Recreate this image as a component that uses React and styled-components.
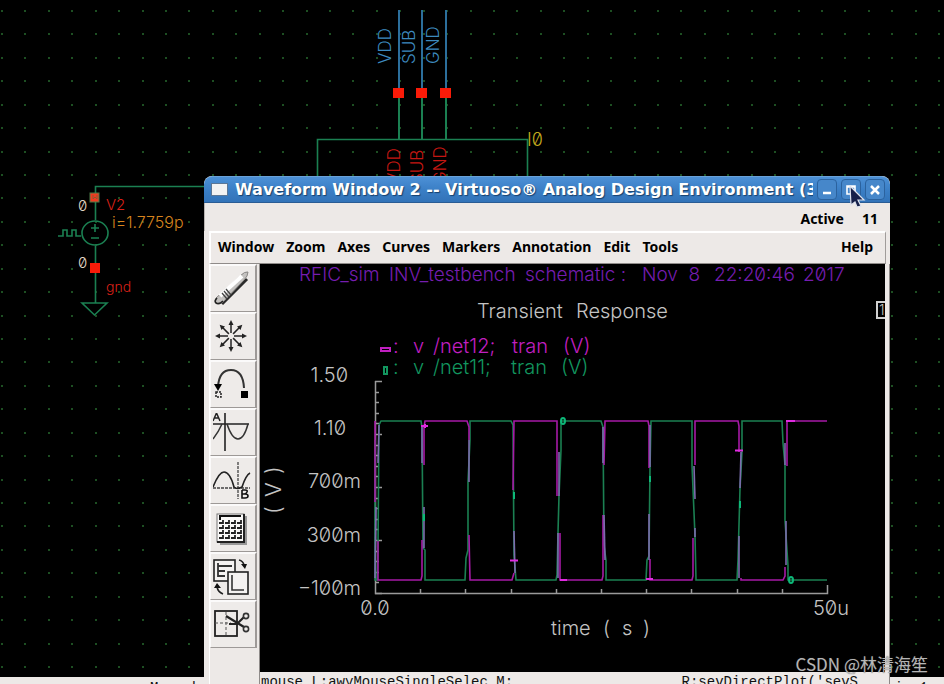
import React from "react";
import styled, { createGlobalStyle } from "styled-components";

const PANEL = "#ede9e7";
const GREEN = "#1b8052";
const MAGENTA = "#a61aa6";
const VIOLET = "#7d6bae";
const TEAL = "#12965f";
const PINK = "#c01fc0";
const GREY = "#9a9a9a";

const GlobalStyle = createGlobalStyle`
  html, body, #root { height: 100%; }
  body { margin: 0; background: #000; overflow: hidden; }
  * { box-sizing: border-box; }
`;

const Desktop = styled.main`
  position: relative;
  display: flex;
  flex-direction: column;
  height: 100vh;
  overflow: hidden;
  background: #000;
`;

const SchematicArea = styled.div`
  flex: 1;
  min-height: 0;
  overflow: hidden;
`;

const SchematicSvg = styled.svg`
  display: block;
  width: 1600px;
  height: 1200px;
`;

const StrokeText = styled.text`
  font-family: Inter, "DejaVu Sans", sans-serif;
  font-weight: 300;
  font-size: ${(p) => p.$size || 20}px;
  fill: ${(p) => p.$color || "#c4c4c4"};
  font-feature-settings: "zero" 1;
  white-space: pre;
`;

const MouseBar = styled.footer`
  display: flex;
  height: ${(p) => p.$height}px;
  flex: none;
  justify-content: space-between;
  overflow: hidden;
  padding: ${(p) => p.$pad};
  background: ${PANEL};
  color: #111;
  font: 14px/16px "Liberation Mono", monospace;
  white-space: pre;
`;

const Frame = styled.section`
  position: absolute;
  top: 176px;
  right: 54px;
  bottom: 0;
  left: 204px;
  display: flex;
  flex-direction: column;
  overflow: hidden;
  border-radius: 8px 8px 0 0;
  background: ${PANEL};
`;

const TitleBar = styled.header`
  display: flex;
  flex: none;
  align-items: center;
  gap: 4px;
  height: 27px;
  padding: 0 5px 0 7px;
  border-top: 1px solid #6aa2d8;
  border-bottom: 1px solid #2a5c94;
  border-radius: 8px 8px 0 0;
  background: linear-gradient(#4c90d6, #3b7fc6 50%, #3273b8);
`;

const WindowGlyph = styled.span`
  flex: none;
  width: 17px;
  height: 13px;
  border: 1px solid #5b7796;
  background: #f2f2f2;
`;

const Title = styled.h1`
  flex: 1;
  min-width: 0;
  margin: 0 0 0 3px;
  overflow: hidden;
  color: #fff;
  font: bold 16px/22px "DejaVu Sans", sans-serif;
  text-shadow: 1px 1px 1px #17406c;
  white-space: nowrap;
`;

const TitleButton = styled.button`
  display: grid;
  flex: none;
  place-items: center;
  width: 20px;
  height: 21px;
  padding: 0;
  border: 1px solid #2b629e;
  border-radius: 4px;
  background: #4687ca;
  color: #fff;
`;

const StatusRow = styled.div`
  display: flex;
  flex: none;
  justify-content: flex-end;
  gap: 18px;
  height: 28px;
  padding: 0 12px 0 0;
  border-left: 1px solid #b8b4b2;
  color: #000;
  font: bold 14px/32px "Noto Sans", sans-serif;
`;

const MenuBar = styled.nav`
  display: flex;
  flex: none;
  align-items: center;
  gap: 12px;
  height: 33px;
  margin: 0 4px 0 5px;
  padding: 0 12px 3px 7px;
  border: solid;
  border-width: 2px 1px 1px 2px;
  border-color: #fff #a09c9a #8f8b89 #fff;
`;

const MenuItem = styled.button`
  margin-left: ${(p) => (p.$end ? "auto" : "0")};
  padding: 0;
  border: 0;
  background: none;
  color: #000;
  font: bold 14px/20px "Noto Sans", sans-serif;
`;

const Body = styled.div`
  display: flex;
  flex: 1;
  min-height: 0;
  padding-right: 4px;
  border-right: 1px solid #8d8987;
`;

const ToolColumn = styled.div`
  display: flex;
  flex: none;
  flex-direction: column;
  width: 51px;
  margin-left: 5px;
  padding-right: 3px;
  border-left: 1px solid #fff;
  border-right: 1px solid #8f8b89;
`;

const ToolButton = styled.button`
  display: grid;
  place-items: center;
  width: 47px;
  height: 48px;
  padding: 0;
  border: solid;
  border-width: 2px 2px 1px 1px;
  border-color: #fbfafa #9d9997 #9d9997 #fbfafa;
  background: #eeebe9;
`;

const Content = styled.div`
  display: flex;
  flex: 1;
  flex-direction: column;
  min-width: 0;
`;

const Plot = styled.div`
  flex: 1;
  min-height: 0;
  overflow: hidden;
  background: #000;
`;

const PlotSvg = styled.svg`
  display: block;
  width: 100%;
  height: auto;
`;

const Pointer = styled.svg`
  position: absolute;
  top: 185px;
  left: 848px;
  pointer-events: none;
`;

const Watermark = styled.div`
  position: absolute;
  right: 16px;
  bottom: 8px;
  color: rgba(205, 205, 205, 0.85);
  font: 17px/24px "Noto Sans CJK SC", sans-serif;
  text-shadow: 0 0 1px #444;
  white-space: nowrap;
`;

const PITCH = 23.43;
const dots = [];
for (let row = 0; row < 50; row += 1) {
  for (let col = 0; col < 68; col += 1) {
    dots.push([Math.round(1 + col * PITCH), Math.round(10 + row * PITCH)]);
  }
}

const pins = [
  { x: 399, name: "VDD" },
  { x: 422, name: "SUB" },
  { x: 446, name: "GND" },
];

function Schematic() {
  return (
    <SchematicSvg viewBox="0 0 1600 1200" role="img" aria-label="Schematic">
      <g fill="#1d4f22">
        {dots.map(([x, y]) => (
          <rect key={`${x}-${y}`} x={x} y={y} width="2" height="2" />
        ))}
      </g>
      <g fill="none" stroke={GREEN} strokeWidth="1.6">
        <path d="M317.500 190V139.500H527.500V190" />
        <path d="M95.500 220V186.500H320M95.500 246V303M82 303H107L94.500 315Z" />
        <ellipse cx="95" cy="233" rx="13" ry="12" />
        <path d="M91 228h8M95 224v8M91 238h8" />
        <path d="M58 236h5v-6h4v6h5v-6h4v6h5" />
      </g>
      {pins.map(({ x, name }, i) => (
        <g key={name}>
          <path d={`M${x} 10V90`} stroke="#2c6f9c" strokeWidth="2" />
          <path d={`M${x} 96V140`} stroke={GREEN} strokeWidth="2" />
          <rect x={x - 6} y="88" width="11" height="10" fill="#f91b08" />
          <StrokeText $size={17} $color="#3d8abf" transform={`translate(${391 + i * 24} 64) rotate(-90)`}>
            {name}
          </StrokeText>
          <StrokeText $size={17} $color="#c41712" transform={`translate(${400 + i * 23} 184) rotate(-90)`}>
            {name}
          </StrokeText>
        </g>
      ))}
      <rect x="90" y="193" width="9" height="9" fill="#f03a20" stroke="#4a7a48" />
      <path d="M93 195v4l2 -2l2 2v-4" fill="none" stroke="#8a5a30" />
      <rect x="90" y="263" width="10" height="10" fill="#f91b08" />
      <StrokeText $size={15} $color="#e2d8c6" x="78" y="211">0</StrokeText>
      <StrokeText $size={15} $color="#e2d8c6" x="78" y="268">0</StrokeText>
      <StrokeText $size={15} $color="#dd2018" x="106" y="210">V2</StrokeText>
      <StrokeText $size={16} $color="#d8841e" x="112" y="228">i=1.7759p</StrokeText>
      <StrokeText $size={14} $color="#dd2018" x="106" y="292">gnd</StrokeText>
      <StrokeText $size={18} $color="#c4aa1e" x="527" y="146">I0</StrokeText>
    </SchematicSvg>
  );
}

const yLabels = [
  ["1.50", 348, 382],
  ["1.10", 346, 435],
  ["700m", 361, 488],
  ["300m", 361, 542],
  ["−100m", 361, 595],
];

const magentaPath =
  "M375 421V502M378 541V580H421L422 576V540M424 465V427L425 421H467L469 427V440M469 535L470 580H512L514 573" +
  "M513 490L514 421H557V496M560 533V580H602L603 576V515M604 465L605 421H648L649 426V468M650 559V580H692L693 576V538" +
  "M695 465V421H738L739 426V452M741 578V580H783L785 576V567M787 466V421H827";

const greenPath =
  "M375 440V580H377L378 550L379 425L381 421H421L422 427L423 548L425 550V580H465L466 558L468 550V482L470 440V421H511L513 425L514 555L516 580H556L557 575L558 533" +
  "L559 496L561 450V421H601L603 427L604 545L606 560V580H646L647 560L649 556L650 468L651 421H692V465L695 536L696 580H737L738 560L740 489L742 452V421H782L783 443L785 465V520L788 566V580H827";

const blends = [
  [376, 507, 375, 578], [379, 425, 378, 463], [422, 427, 422, 463], [424, 507, 424, 548],
  [469, 440, 469, 482], [514, 531, 515, 573], [559, 452, 559, 496], [558, 533, 558, 578],
  [603, 427, 603, 463], [604, 515, 605, 560], [650, 467, 650, 425], [649, 514, 649, 560],
  [694, 466, 695, 499], [695, 528, 695, 537], [741, 452, 740, 488], [739, 536, 739, 578],
  [785, 443, 785, 465], [786, 521, 786, 565],
];

const minorY = Array.from({ length: 21 }, (_, i) => Math.round(381 + i * 10.6));
const minorX = Array.from({ length: 9 }, (_, i) => Math.round(375 + (i + 1) * 45.2));

function Waveform() {
  return (
    <PlotSvg viewBox="260 264 625 408" role="img" aria-label="Transient Response">
      <StrokeText $size={19} $color="#751db0" y="281">
        <tspan x="299">RFIC_sim</tspan>
        <tspan x="389">INV_testbench</tspan>
        <tspan x="525">schematic :</tspan>
        <tspan x="642">Nov  8</tspan>
        <tspan x="714">22:20:46</tspan>
        <tspan x="803">2017</tspan>
      </StrokeText>
      <StrokeText x="477" y="318">
        Transient<tspan x="576">Response</tspan>
      </StrokeText>
      <rect x="877" y="302" width="12" height="16" fill="none" stroke="#d0d0d0" strokeWidth="2" />
      <StrokeText $size={14} x="879" y="315">1</StrokeText>

      <rect x="381" y="348" width="9" height="3" fill="none" stroke={PINK} strokeWidth="2" />
      <StrokeText $color={PINK} y="353">
        <tspan x="393">:</tspan>
        <tspan x="413">v</tspan>
        <tspan x="433">/net12;</tspan>
        <tspan x="512">tran</tspan>
        <tspan x="563">(V)</tspan>
      </StrokeText>
      <rect x="384" y="367" width="3" height="7" fill="none" stroke={TEAL} strokeWidth="2" />
      <StrokeText $color={TEAL} y="374">
        <tspan x="393">:</tspan>
        <tspan x="413">v</tspan>
        <tspan x="433">/net11;</tspan>
        <tspan x="511">tran</tspan>
        <tspan x="561">(V)</tspan>
      </StrokeText>

      {yLabels.map(([label, x, y]) => (
        <StrokeText key={label} x={x} y={y} textAnchor="end">{label}</StrokeText>
      ))}
      <StrokeText x="375" y="615" textAnchor="middle">0.0</StrokeText>
      <StrokeText x="831" y="615" textAnchor="middle">50u</StrokeText>
      <StrokeText y="635">
        <tspan x="551">time</tspan>
        <tspan x="603">(</tspan>
        <tspan x="622">s</tspan>
        <tspan x="643">)</tspan>
      </StrokeText>
      <StrokeText $size={22} transform="translate(281 514) rotate(-90)">
        <tspan x="0">(</tspan>
        <tspan x="17">V</tspan>
        <tspan x="40">)</tspan>
      </StrokeText>

      <g fill="none" stroke={GREY} strokeWidth="1.500">
        <path d="M375.500 381V593.500H827.500V585" />
        {minorY.map((y, i) => (
          <path key={y} d={`M375 ${y + 0.5}h${i % 5 === 0 ? 7 : 4}`} />
        ))}
        {minorX.map((x) => (
          <path key={x} d={`M${x + 0.5} 593v-4`} />
        ))}
      </g>
      <g fill="none" strokeWidth="1.600">
        <path d={greenPath} stroke={GREEN} />
        <path d={magentaPath} stroke={MAGENTA} />
        {blends.map(([x1, y1, x2, y2]) => (
          <path key={`${x1}-${y1}`} d={`M${x1} ${y1}L${x2} ${y2}`} stroke={VIOLET} />
        ))}
      </g>
      <g fill="none" stroke="#e02be0" strokeWidth="2">
        <path d="M421 426h7M425 424v4M510 560.500h8M560 580h7M646 579h7M735 450.500h8M786 421h9" />
      </g>
      <g fill="none" stroke="#0db878" strokeWidth="2">
        <path d="M424 514v7M514 492v7M650 476v6M740 501v7" />
        <ellipse cx="563" cy="421" rx="2" ry="3" />
        <ellipse cx="791" cy="580" rx="2" ry="3" />
      </g>
    </PlotSvg>
  );
}

const tools = [
  {
    name: "Erase",
    art: (
      <>
        <path d="M11 36L36 11" stroke="#2a2a2a" strokeWidth="3" />
        <path d="M5 30L29 8Q34 3 37 4Q37 8 33 12L12 34Q8 37 5 35Q3 33 5 30Z" fill="#c4c2c0" stroke="#8a8886" />
        <path d="M9 28L31 8" stroke="#fff" strokeWidth="4" />
        <path d="M6 30Q3 33 5 35Q8 37 12 33" fill="none" stroke="#222" strokeWidth="1.600" />
        <path d="M11 25l5 6M13 23l5 6M15 21l5 6" stroke="#444" strokeWidth="1.300" />
      </>
    ),
  },
  {
    name: "Fit",
    art: (
      <g transform="translate(20 20)">
        {[0, 45, 90, 135, 180, 225, 270, 315].map((a) => (
          <g key={a} transform={`rotate(${a})`}>
            <path d="M3 0H13" stroke="#222" strokeWidth="1.500" />
            <path d="M11 -2.500L16 0L11 2.500Z" fill="#222" />
          </g>
        ))}
      </g>
    ),
  },
  {
    name: "Swap",
    art: (
      <>
        <path d="M7 23Q8 6 20 6Q32 6 33 24" fill="none" stroke="#333" strokeWidth="2" />
        <path d="M3 20h8l-4 7Z" fill="#000" />
        <rect x="5" y="28" width="5" height="5" fill="none" stroke="#222" strokeDasharray="2 1" strokeWidth="1.500" />
        <rect x="30" y="27" width="7" height="7" fill="#000" />
      </>
    ),
  },
  {
    name: "Marker A",
    art: (
      <>
        <path d="M1 12H38M14 1V39" stroke="#222" strokeWidth="1.600" />
        <path d="M2 27Q8 19 11 12M16 12Q21 27 27 27Q33 27 37 12" fill="none" stroke="#333" strokeWidth="1.500" />
        <path d="M2 9L5.500 1L9 9M3 6h5" fill="none" stroke="#222" strokeWidth="1.500" />
      </>
    ),
  },
  {
    name: "Marker B",
    art: (
      <>
        <path d="M2 28H39M27 2V39" stroke="#444" strokeDasharray="3 1" strokeWidth="1.300" />
        <path d="M2 27Q8 12 13 12Q19 12 23 27Q26 30 31 27Q35 15 39 13" fill="none" stroke="#222" strokeWidth="1.600" />
        <path d="M31 30v8h3q3 0 3 -2t-3 -2h-3M31 30h3q3 0 2 2t-3 2" fill="none" stroke="#111" strokeWidth="1.600" />
      </>
    ),
  },
  {
    name: "Calculator",
    art: (
      <>
        <path d="M9 36H35V8" fill="none" stroke="#999" strokeWidth="2" />
        <rect x="6" y="6" width="27" height="28" fill="#faf9f8" stroke="#777" />
        <path d="M33 6V34H6" fill="none" stroke="#222" strokeWidth="2" />
        <path d="M9 12V8H30" fill="none" stroke="#111" strokeWidth="2" />
        {[15, 20, 25, 30].map((y) => (
          <path key={y} d={`M8 ${y}h4v-3M14 ${y}h4v-3M20 ${y}h4v-3M26 ${y}h4v-3`} fill="none" stroke="#222" strokeWidth="1.800" />
        ))}
      </>
    ),
  },
  {
    name: "Switch windows",
    art: (
      <>
        <rect x="3" y="4" width="21" height="21" fill="#f4f2f1" stroke="#222" strokeWidth="1.600" />
        <path d="M7 7v14M7 10h14M7 15h7M7 20h7" fill="none" stroke="#333" strokeWidth="1.800" />
        <rect x="17" y="16" width="20" height="22" fill="#f4f2f1" stroke="#222" strokeWidth="1.600" />
        <path d="M21 19v15h12" fill="none" stroke="#333" strokeWidth="1.600" />
        <path d="M28 4Q32 5 33 9M6 31Q7 36 12 38" fill="none" stroke="#222" strokeWidth="1.600" />
        <path d="M30 8h6l-2 5ZM3 32l3 -5l4 5Z" fill="#111" />
      </>
    ),
  },
  {
    name: "Cut",
    art: (
      <>
        <rect x="4" y="7" width="22" height="25" fill="none" stroke="#222" strokeWidth="1.800" />
        <path d="M15 8V32M4 19H20" stroke="#555" strokeDasharray="3 2" />
        <path d="M15 12L33 23M18 20h8L33 13" fill="none" stroke="#222" strokeWidth="2.200" />
        <circle cx="35" cy="12" r="2.600" fill="none" stroke="#333" strokeWidth="1.600" />
        <circle cx="35" cy="25" r="2.600" fill="none" stroke="#333" strokeWidth="1.600" />
      </>
    ),
  },
];

const menus = ["Window", "Zoom", "Axes", "Curves", "Markers", "Annotation", "Edit", "Tools"];

export default function App() {
  return (
    <>
      <GlobalStyle />
      <Desktop>
        <SchematicArea>
          <Schematic />
        </SchematicArea>
        <MouseBar $height={7} $pad="3px 16px 0 150px">
          <span>M: sch</span>
          <span>ign1</span>
        </MouseBar>
        <Frame>
          <TitleBar>
            <WindowGlyph />
            <Title>Waveform Window 2 -- Virtuoso® Analog Design Environment (3)</Title>
            <TitleButton aria-label="Minimize">
              <svg width="12" height="12"><path d="M2 9h8" stroke="#fff" strokeWidth="2.500" /></svg>
            </TitleButton>
            <TitleButton aria-label="Maximize">
              <svg width="12" height="12"><path d="M2 2h8v8h-8zM2 3h8M6 5v3" fill="none" stroke="#fff" strokeWidth="1.600" /></svg>
            </TitleButton>
            <TitleButton aria-label="Close">
              <svg width="12" height="12"><path d="M2 2l8 8M10 2l-8 8" stroke="#fff" strokeWidth="2.500" /></svg>
            </TitleButton>
          </TitleBar>
          <StatusRow>
            <span>Active</span>
            <span>11</span>
          </StatusRow>
          <MenuBar>
            {menus.map((m) => (
              <MenuItem key={m}>{m}</MenuItem>
            ))}
            <MenuItem $end>Help</MenuItem>
          </MenuBar>
          <Body>
            <ToolColumn>
              {tools.map(({ name, art }) => (
                <ToolButton key={name} aria-label={name}>
                  <svg width="40" height="40" viewBox="2 1 40 40">{art}</svg>
                </ToolButton>
              ))}
            </ToolColumn>
            <Content>
              <Plot>
                <Waveform />
              </Plot>
              <MouseBar $height={12} $pad="2px 27px 0 1px">
                <span>mouse L:awyMouseSingleSelec M:</span>
                <span>R:sevDirectPlot('sevS</span>
              </MouseBar>
            </Content>
          </Body>
        </Frame>
        <Pointer width="18" height="24" viewBox="0 0 18 24">
          <path d="M2 1L16 15H10L13 21L9 22L7 17L3 20Z" fill="#16204a" stroke="#dfe3ee" strokeWidth="1.200" />
        </Pointer>
        <Watermark>CSDN @林清海笙</Watermark>
      </Desktop>
    </>
  );
}
